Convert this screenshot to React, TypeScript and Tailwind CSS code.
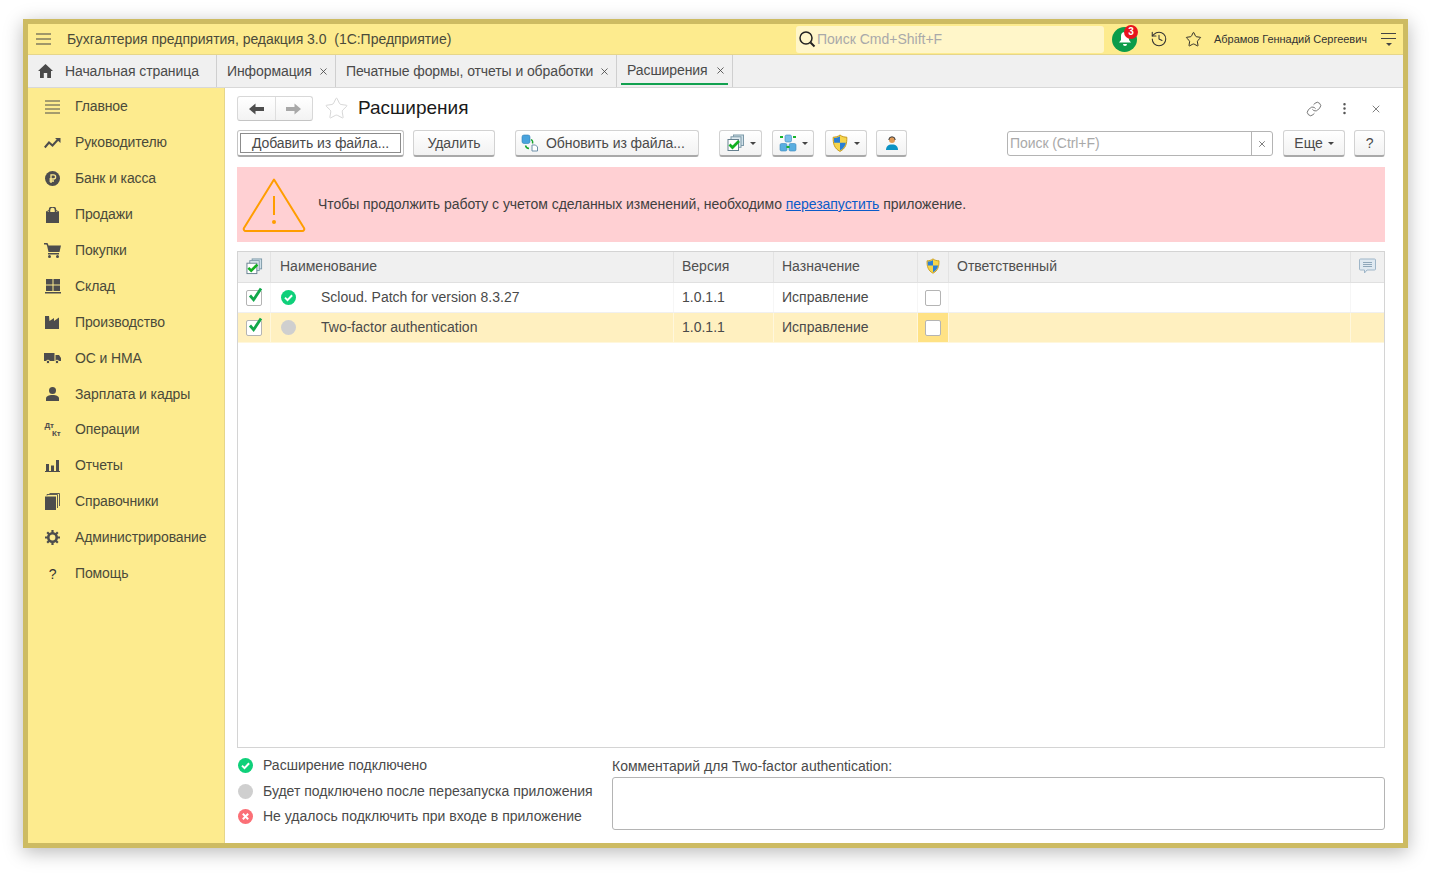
import type { ReactNode } from "react";
import { History, Link, MoreVertical, Star, X } from "lucide-react";

const font = "font-['Liberation_Sans',Arial,sans-serif]";

function Caret({ className = "ml-[5px]" }: { className?: string }) {
  return <span className={`h-0 w-0 border-x-[3px] border-t-[3px] border-x-transparent border-t-[#444] ${className}`} />;
}

function StatusIcon({ kind }: { kind: "ok" | "wait" | "fail" }) {
  if (kind === "wait") return <span className="block h-[15px] w-[15px] rounded-full bg-[#cfcfcf]" />;
  return (
    <svg width="15" height="15" viewBox="0 0 15 15" className="block">
      <circle cx="7.5" cy="7.5" r="7.5" fill={kind === "ok" ? "#0fd07a" : "#fb6f76"} />
      {kind === "ok" ? (
        <path d="M4 7.6l2.5 2.5 4.6-4.8" fill="none" stroke="#fff" strokeWidth="2" />
      ) : (
        <path d="M4.8 4.8l5.4 5.4M10.2 4.8l-5.4 5.4" fill="none" stroke="#fff" strokeWidth="2" />
      )}
    </svg>
  );
}

function CheckBox({ checked }: { checked?: boolean }) {
  return (
    <span className="relative block h-[16px] w-[16px] rounded-[2px] border border-[#b4b4b4] bg-white">
      {checked && (
        <svg width="18" height="18" viewBox="0 0 18 18" className="absolute left-[0px] top-[-5px]">
          <path d="M3 9.500l3.600 4.200L14 2.500" fill="none" stroke="#11a84a" strokeWidth="2.800" />
        </svg>
      )}
    </span>
  );
}

function StackCheckIcon({ size = 18 }: { size?: number }) {
  return (
    <svg width={size} height={size} viewBox="0 0 18 18">
      <rect x="6.500" y="1" width="10" height="10.500" fill="#cfe0e9" stroke="#7d99a8" />
      <rect x="4" y="2.800" width="10" height="10.500" fill="#dfeaf0" stroke="#7d99a8" />
      <rect x="1" y="5.500" width="10.500" height="11" fill="#fff" stroke="#66808f" />
      <path d="M2.500 10.500l3 3 6.500-6.500" fill="none" stroke="#12b022" strokeWidth="2.800" />
    </svg>
  );
}

function ShieldIcon({ size = 16 }: { size?: number }) {
  return (
    <svg width={size} height={size * 1.15} viewBox="0 0 16 18">
      <path d="M8 .8C6 2.400 3.600 3 1.200 3c-.3 6.500 1.300 11.500 6.800 14.200C13.500 14.500 15.100 9.500 14.800 3 12.400 3 10 2.400 8 .8z" fill="#f6d54b" stroke="#c79a1e" />
      <path d="M8 2v6.500H2.200C2 5.800 2 4.700 2 3.900 4.200 3.800 6.300 3.200 8 2z" fill="#2a7fd6" />
      <path d="M8 8.500h5.800c-.5 3.300-2.300 5.800-5.800 7.700z" fill="#2a7fd6" />
    </svg>
  );
}

function NetworkIcon() {
  return (
    <svg width="18" height="18" viewBox="0 0 18 18">
      <rect x="6" y="1" width="6.500" height="7" rx="1.500" fill="#7cc0ea" stroke="#3a86bd" strokeWidth=".6" />
      <rect x="1" y="9.500" width="7" height="7.500" rx="1.500" fill="#5aaee0" stroke="#3a86bd" strokeWidth=".6" />
      <rect x="10" y="9.500" width="7" height="7.500" rx="1.500" fill="#5aaee0" stroke="#3a86bd" strokeWidth=".6" />
      <path d="M1 3h3M14 3h3M7.500 13h3" stroke="#17b32b" strokeWidth="1.800" />
    </svg>
  );
}

function PersonIcon() {
  return (
    <svg width="14" height="15" viewBox="0 0 14 15">
      <circle cx="7" cy="4" r="3" fill="#e09a56" />
      <path d="M3.800 4a3.200 3.200 0 0 1 6.400 0" fill="none" stroke="#333" strokeWidth="1" />
      <path d="M1 14c0-3.500 2-5.500 6-5.500s6 2 6 5.500z" fill="#0c93c4" />
    </svg>
  );
}

function UpdateIcon() {
  return (
    <svg width="18" height="18" viewBox="0 0 18 18">
      <rect x="1" y="1" width="8" height="8.500" rx="2" fill="#49a3dd" stroke="#2f7fb5" strokeWidth=".6" />
      <path d="M11 11h3.500l2 2v4H11z" fill="#fff" stroke="#6d8fa8" />
      <path d="M10 5.500c1.500.8 2 2.300 1.500 4M4.500 11.500c.4 1.800 1.500 2.800 3.500 3" fill="none" stroke="#17a52c" strokeWidth="1.400" />
    </svg>
  );
}

function BlockArrow({ color, flip }: { color: string; flip?: boolean }) {
  return (
    <svg width="15" height="12" viewBox="0 0 15 12" className={flip ? "rotate-180" : ""}>
      <path d="M0 6l6.500-5.500v3.500H15v4H6.500v3.500z" fill={color} />
    </svg>
  );
}

function NavIcon({ name }: { name: string }) {
  const c = "#4d4d4d";
  switch (name) {
    case "lines":
      return (
        <svg width="16" height="14" viewBox="0 0 16 14">
          <path d="M0 1h15M0 5h15M0 9h15M0 13h15" stroke={c} strokeWidth="1" />
        </svg>
      );
    case "trend":
      return (
        <svg width="17" height="12" viewBox="0 0 17 12">
          <path d="M.8 10.500 5 5.500l3.500 3L14 2.500" fill="none" stroke={c} strokeWidth="2" />
          <path d="M11 1h5.500v5z" fill={c} />
        </svg>
      );
    case "bank":
      return (
        <svg width="15" height="15" viewBox="0 0 15 15">
          <circle cx="7.500" cy="7.500" r="7.500" fill={c} />
          <path d="M6 12V3.800h2.500a2 2 0 0 1 0 4.200H4.500M4.500 10h4.500" fill="none" stroke="#fdeb8e" strokeWidth="1.300" />
        </svg>
      );
    case "bag":
      return (
        <svg width="13" height="16" viewBox="0 0 13 16">
          <path d="M0 5h13v11H0z" fill={c} />
          <path d="M3.500 7V3a3 3 0 0 1 6 0v4" fill="none" stroke={c} strokeWidth="1.500" />
          <path d="M0 5l4-2M13 5l-4-2" stroke={c} />
        </svg>
      );
    case "cart":
      return (
        <svg width="17" height="15" viewBox="0 0 17 15">
          <path d="M0 .8h3l1 2" fill="none" stroke={c} strokeWidth="1.500" />
          <path d="M3 2.500h14l-1.500 6.500H4.500z" fill={c} />
          <path d="M4 10h11v1.500H4z" fill={c} />
          <circle cx="5.500" cy="13.500" r="1.500" fill={c} />
          <circle cx="13.500" cy="13.500" r="1.500" fill={c} />
        </svg>
      );
    case "stock":
      return (
        <svg width="16" height="15" viewBox="0 0 16 15">
          <path d="M1 0h6.500v5.500H1zM8.500 0H15v5.500H8.500zM1 6.500h6.500V12H1zM8.500 6.500H15V12H8.500zM0 13h16v1.500H0z" fill={c} />
        </svg>
      );
    case "factory":
      return (
        <svg width="15" height="14" viewBox="0 0 15 14">
          <path d="M0 14V1h4l.5 5L9 3v3l5-3.500V14z" fill={c} />
        </svg>
      );
    case "truck":
      return (
        <svg width="17" height="12" viewBox="0 0 17 12">
          <path d="M0 1h10.500v8H0zM11.500 3H15l2 3v3h-5.500z" fill={c} />
          <circle cx="4" cy="10" r="1.800" fill={c} stroke="#fdeb8e" />
          <circle cx="13" cy="10" r="1.800" fill={c} stroke="#fdeb8e" />
        </svg>
      );
    case "person":
      return (
        <svg width="13" height="14" viewBox="0 0 13 14">
          <circle cx="6.500" cy="3.500" r="3.500" fill={c} />
          <path d="M0 14v-2.500C0 9.500 2.500 8 6.500 8s6.500 1.500 6.500 3.500V14z" fill={c} />
        </svg>
      );
    case "dtkt":
      return (
        <span className="relative block h-[16px] w-[16px] text-[8px] font-bold leading-none text-[#4d4d4d]">
          <span className="absolute left-0 top-0">Дт</span>
          <span className="absolute bottom-0 right-0">Кт</span>
        </span>
      );
    case "chart":
      return (
        <svg width="15" height="12" viewBox="0 0 15 12">
          <path d="M1 4h3v7H1zM6 5.500h3V11H6zM11 0h3v11h-3zM0 11h15v1H0z" fill={c} />
        </svg>
      );
    case "books":
      return (
        <svg width="15" height="17" viewBox="0 0 15 17">
          <path d="M0 3.500h11V17H0z" fill={c} />
          <path d="M2 2.500V1.500h10.500V15M4.500.5H14.500V13" fill="none" stroke={c} strokeWidth=".9" />
        </svg>
      );
    case "gear":
      return (
        <svg width="15" height="15" viewBox="0 0 15 15">
          <circle cx="7.500" cy="7.500" r="4.200" fill="none" stroke={c} strokeWidth="2.600" />
          <path d="M7.500 0v3M7.500 12v3M0 7.500h3M12 7.500h3M2.200 2.200l2 2M10.800 10.800l2 2M12.800 2.200l-2 2M4.200 10.800l-2 2" stroke={c} strokeWidth="2.200" />
        </svg>
      );
    default:
      return <span className="text-[14px] leading-none text-[#333]">?</span>;
  }
}

const navItems = [
  ["lines", "Главное"],
  ["trend", "Руководителю"],
  ["bank", "Банк и касса"],
  ["bag", "Продажи"],
  ["cart", "Покупки"],
  ["stock", "Склад"],
  ["factory", "Производство"],
  ["truck", "ОС и НМА"],
  ["person", "Зарплата и кадры"],
  ["dtkt", "Операции"],
  ["chart", "Отчеты"],
  ["books", "Справочники"],
  ["gear", "Администрирование"],
  ["help", "Помощь"],
];

function Tab({ label, className }: { label: string; className: string }) {
  return (
    <div className={`flex h-full items-center justify-between border-r border-[#cfcfcf] ${className}`}>
      <span>{label}</span>
      <X size={11} strokeWidth={1.800} className="text-[#444]" />
    </div>
  );
}

function Btn({ children, className = "" }: { children: ReactNode; className?: string }) {
  return (
    <div
      className={`flex h-[27px] items-center rounded-[3px] border border-[#d2d2d2] border-b-[2px] border-b-[#a9a9a9] bg-gradient-to-b from-white to-[#f2f2f2] text-[#4a4a4a] ${className}`}
    >
      {children}
    </div>
  );
}

function HeaderCell({ children, className }: { children?: ReactNode; className: string }) {
  return <div className={`flex h-full items-center border-r border-[#e3e3e3] pb-[1px] ${className}`}>{children}</div>;
}

function Row({ name, status, selected }: { name: string; status: "ok" | "wait"; selected?: boolean }) {
  const divider = selected ? "border-[#fff7dc]" : "border-[#f6f6f6]";
  return (
    <div className={`flex h-[30px] items-center border-b text-[14px] text-[#4a4a4a] ${selected ? "border-[#fff7dc] bg-[#fff0c0]" : "border-[#f0f0f0] bg-white"}`}>
      <div className={`flex h-full w-[33px] items-center justify-center border-r ${divider}`}>
        <CheckBox checked />
      </div>
      <div className={`flex h-full w-[403px] items-center border-r pl-[10px] ${divider}`}>
        <StatusIcon kind={status} />
        <span className="ml-[25px]">{name}</span>
      </div>
      <div className={`flex h-full w-[100px] items-center border-r pl-[8px] ${divider}`}>1.0.1.1</div>
      <div className={`flex h-full w-[144px] items-center border-r pl-[8px] ${divider}`}>Исправление</div>
      <div className={`flex h-full w-[31px] items-center justify-center border-r ${divider} ${selected ? "bg-[#ffe285]" : ""}`}>
        <CheckBox />
      </div>
      <div className={`h-full w-[402px] border-r ${divider}`} />
      <div className="flex-1" />
    </div>
  );
}

export default function App() {
  return (
    <div className={`h-[875px] w-[1431px] overflow-hidden bg-white pl-[23px] pt-[19px] ${font}`}>
      <div className="flex h-[829px] w-[1385px] flex-col border-[5px] border-[#cdbb62] bg-white shadow-[0_4px_18px_rgba(0,0,0,0.28)]">
        <header className="flex h-[31px] shrink-0 items-center border-b border-[#e6d68a] bg-[#fdeb8e] text-[#4a4a3a]">
          <svg width="15" height="12" viewBox="0 0 15 12" className="ml-[8px]">
            <path d="M0 1h15M0 6h15M0 11h15" stroke="#444" strokeWidth="1.200" />
          </svg>
          <span className="ml-[16px] w-[729px] text-[14px] tracking-[-0.02px]">Бухгалтерия предприятия, редакция 3.0&nbsp; (1С:Предприятие)</span>
          <div className="flex h-[27px] w-[308px] items-center rounded-[3px] bg-[#fff6c9]">
            <svg width="18" height="18" viewBox="0 0 18 18" className="ml-[2px]">
              <circle cx="8" cy="8" r="6" fill="none" stroke="#222" strokeWidth="1.500" />
              <path d="M12.500 12.500l4 4" stroke="#222" strokeWidth="2" />
            </svg>
            <span className="ml-px text-[14px] text-[#a9a9a9]">Поиск Cmd+Shift+F</span>
          </div>
          <div className="relative ml-[8px] flex h-[25px] w-[25px] items-center justify-center rounded-full bg-[#0b9c4a]">
            <svg width="14" height="16" viewBox="0 0 14 16">
              <path d="M7 1a4 4 0 0 1 4 4v4l2 2.500H1L3 9V5a4 4 0 0 1 4-4z" fill="#fff" />
              <path d="M5 13h4a2 2 0 0 1-4 0z" fill="#fff" />
            </svg>
            <span className="absolute right-[-1px] top-[-2px] flex h-[14px] w-[14px] items-center justify-center rounded-full bg-[#e8141e] text-[10px] font-bold text-white">3</span>
          </div>
          <History size={18} strokeWidth={1.400} className="ml-[13px] text-[#333]" />
          <Star size={17} strokeWidth={1.300} className="ml-[17px] text-[#222]" />
          <span className="ml-[12px] w-[160px] whitespace-nowrap text-[11px] tracking-[-0.03px] text-[#333]">Абрамов Геннадий Сергеевич</span>
          <div className="ml-[7px] flex w-[15px] flex-col items-center gap-[4px]">
            <span className="h-px w-[15px] bg-[#444]" />
            <span className="h-px w-[15px] bg-[#444]" />
            <span className="h-0 w-0 border-x-[3px] border-t-[3px] border-x-transparent border-t-[#444]" />
          </div>
        </header>

        <nav className="flex h-[33px] shrink-0 items-center border-b border-[#d8d8d8] bg-[#f0f0f0] text-[14px] tracking-[-0.09px] text-[#4a4a4a]">
          <div className="flex h-full w-[189px] items-center border-r border-[#cfcfcf] pl-[10px]">
            <svg width="15" height="14" viewBox="0 0 15 14">
              <path d="M7.500 0 15 7h-2v7H9.200V9H5.800v5H2V7H0z" fill="#4a4a4a" />
            </svg>
            <span className="ml-[12px]">Начальная страница</span>
          </div>
          <Tab label="Информация" className="w-[119px] pl-[10px] pr-[6px]" />
          <Tab label="Печатные формы, отчеты и обработки" className="w-[281px] pl-[10px] pr-[6px]" />
          <div className="h-full w-[116px] border-r border-[#cfcfcf] px-[4px]">
            <div className="flex h-[30px] items-center justify-between border-b-[2px] border-[#12a150] pl-[6px] pr-[2px] pt-[3px]">
              <span>Расширения</span>
              <X size={11} strokeWidth={1.800} className="text-[#444]" />
            </div>
          </div>
        </nav>

        <div className="flex min-h-0 flex-1">
          <aside className="w-[197px] shrink-0 border-r border-[#e6d68a] bg-[#fdeb8e] pt-px">
            {navItems.map(([icon, label]) => (
              <div key={label} className="flex h-[35.9px] items-center text-[14px] tracking-[-0.12px] text-[#4a4a3a]">
                <span className="flex w-[47px] justify-center pl-[2px]">
                  <NavIcon name={icon} />
                </span>
                <span>{label}</span>
              </div>
            ))}
          </aside>

          <main className="flex min-w-0 flex-1 flex-col pl-[12px] pr-[18px]">
            <div className="mt-[8px] flex h-[25px] shrink-0 items-center">
              <div className="flex h-[25px] w-[76px] rounded-[3px] border border-[#d8d8d8] border-b-[#c4c4c4] bg-gradient-to-b from-white to-[#f3f3f3]">
                <span className="flex flex-1 items-center justify-center border-r border-[#dedede]">
                  <BlockArrow color="#4d4d4d" />
                </span>
                <span className="flex flex-1 items-center justify-center">
                  <BlockArrow color="#a8a8a8" flip />
                </span>
              </div>
              <Star size={25} strokeWidth={0.800} className="ml-[11px] text-[#cfcfcf]" />
              <span className="ml-[9px] text-[19px] text-[#1a1a1a]">Расширения</span>
              <Link size={16} strokeWidth={1.200} className="ml-auto text-[#555]" />
              <MoreVertical size={15} strokeWidth={2} className="ml-[15px] text-[#555]" />
              <X size={12} strokeWidth={1.500} className="ml-[18px] mr-[3px] text-[#555]" />
            </div>

            <div className="mt-[9px] flex h-[27px] shrink-0 items-center text-[14px] tracking-[-0.07px]">
              <div className="flex h-[27px] w-[167px] items-center justify-center rounded-[3px] border border-[#c4c4c4] border-b-[2px] border-b-[#a9a9a9] bg-white p-[2px] text-[#4a4a4a]">
                <span className="flex h-full w-full items-center justify-center border border-[#8c8c8c]">Добавить из файла...</span>
              </div>
              <Btn className="ml-[9px] w-[82px] justify-center">Удалить</Btn>
              <Btn className="ml-[20px] w-[184px] pl-[5px]">
                <UpdateIcon />
                <span className="ml-[7px]">Обновить из файла...</span>
              </Btn>
              <Btn className="ml-[20px] w-[43px] pl-[7px]">
                <StackCheckIcon />
                <Caret />
              </Btn>
              <Btn className="ml-[10px] w-[42px] pl-[6px]">
                <NetworkIcon />
                <Caret />
              </Btn>
              <Btn className="ml-[11px] w-[42px] pl-[6px]">
                <ShieldIcon />
                <Caret className="ml-[6px]" />
              </Btn>
              <Btn className="ml-[9px] w-[31px] justify-center">
                <PersonIcon />
              </Btn>
              <div className="ml-[100px] flex h-[25px] w-[266px] items-center rounded-[3px] border border-[#b4b4b4] bg-white">
                <span className="ml-[2px] flex-1 text-[#a9a9a9]">Поиск (Ctrl+F)</span>
                <span className="flex h-full w-[21px] items-center justify-center border-l border-[#b4b4b4]">
                  <X size={10} strokeWidth={1.800} className="text-[#555]" />
                </span>
              </div>
              <Btn className="ml-[10px] w-[62px] justify-center">
                Еще
                <Caret />
              </Btn>
              <Btn className="ml-[9px] w-[31px] justify-center">?</Btn>
            </div>

            <div className="mt-[10px] flex h-[75px] shrink-0 items-center bg-[#ffd0d3] text-[14px] tracking-[-0.05px] text-[#3f3f3f]">
              <svg width="64" height="58" viewBox="0 0 64 58" className="ml-[5px]">
                <path d="M32 3.500 62 52a2 2 0 0 1-1.700 3H3.700A2 2 0 0 1 2 52z" fill="none" stroke="#ff9d00" strokeWidth="2" strokeLinejoin="round" />
                <path d="M32 20v19" stroke="#ff9d00" strokeWidth="2" />
                <circle cx="32" cy="46" r="2" fill="#ff9d00" />
              </svg>
              <span className="ml-[12px]">
                Чтобы продолжить работу с учетом сделанных изменений, необходимо{" "}
                <span className="text-[#0b5cc9] underline">перезапустить</span> приложение.
              </span>
            </div>

            <section className="mt-[9px] flex h-[497px] shrink-0 flex-col border border-[#d4d4d4]">
              <div className="flex h-[31px] shrink-0 items-center border-b border-[#e0e0e0] bg-[#f0f0f0] text-[14px] text-[#4f4f4f]">
                <HeaderCell className="w-[33px] justify-center">
                  <StackCheckIcon size={17} />
                </HeaderCell>
                <HeaderCell className="w-[403px] pl-[9px]">Наименование</HeaderCell>
                <HeaderCell className="w-[100px] pl-[8px]">Версия</HeaderCell>
                <HeaderCell className="w-[144px] pl-[8px]">Назначение</HeaderCell>
                <HeaderCell className="w-[31px] justify-center">
                  <ShieldIcon size={14} />
                </HeaderCell>
                <HeaderCell className="w-[402px] pl-[8px]">Ответственный</HeaderCell>
                <div className="flex flex-1 justify-center pb-[2px]">
                  <svg width="17" height="16" viewBox="0 0 17 16">
                    <path d="M1.500 1h14a1 1 0 0 1 1 1v9a1 1 0 0 1-1 1H8l-2.500 3v-3h-4a1 1 0 0 1-1-1V2a1 1 0 0 1 1-1z" fill="#dfe9f1" stroke="#9fb6c8" />
                    <path d="M4 4.500h9M4 6.500h9M4 8.500h9" stroke="#8ea7ba" />
                  </svg>
                </div>
              </div>
              <Row name="Scloud. Patch for version 8.3.27" status="ok" />
              <Row name="Two-factor authentication" status="wait" selected />
            </section>

            <div className="mt-[8px] flex flex-1 text-[14px] text-[#4a4a4a]">
              <div className="-mt-[3px] w-[375px] shrink-0 pl-px">
                {[
                  ["ok", "Расширение подключено"],
                  ["wait", "Будет подключено после перезапуска приложения"],
                  ["fail", "Не удалось подключить при входе в приложение"],
                ].map(([kind, label]) => (
                  <div key={label} className="flex h-[25.5px] items-center">
                    <StatusIcon kind={kind as "ok" | "wait" | "fail"} />
                    <span className="ml-[10px] whitespace-nowrap">{label}</span>
                  </div>
                ))}
              </div>
              <div className="flex-1">
                <div className="h-[21px] leading-[20px]">Комментарий для Two-factor authentication:</div>
                <div className="h-[53px] rounded-[3px] border border-[#b4b4b4] bg-white" />
              </div>
            </div>
          </main>
        </div>
      </div>
    </div>
  );
}
